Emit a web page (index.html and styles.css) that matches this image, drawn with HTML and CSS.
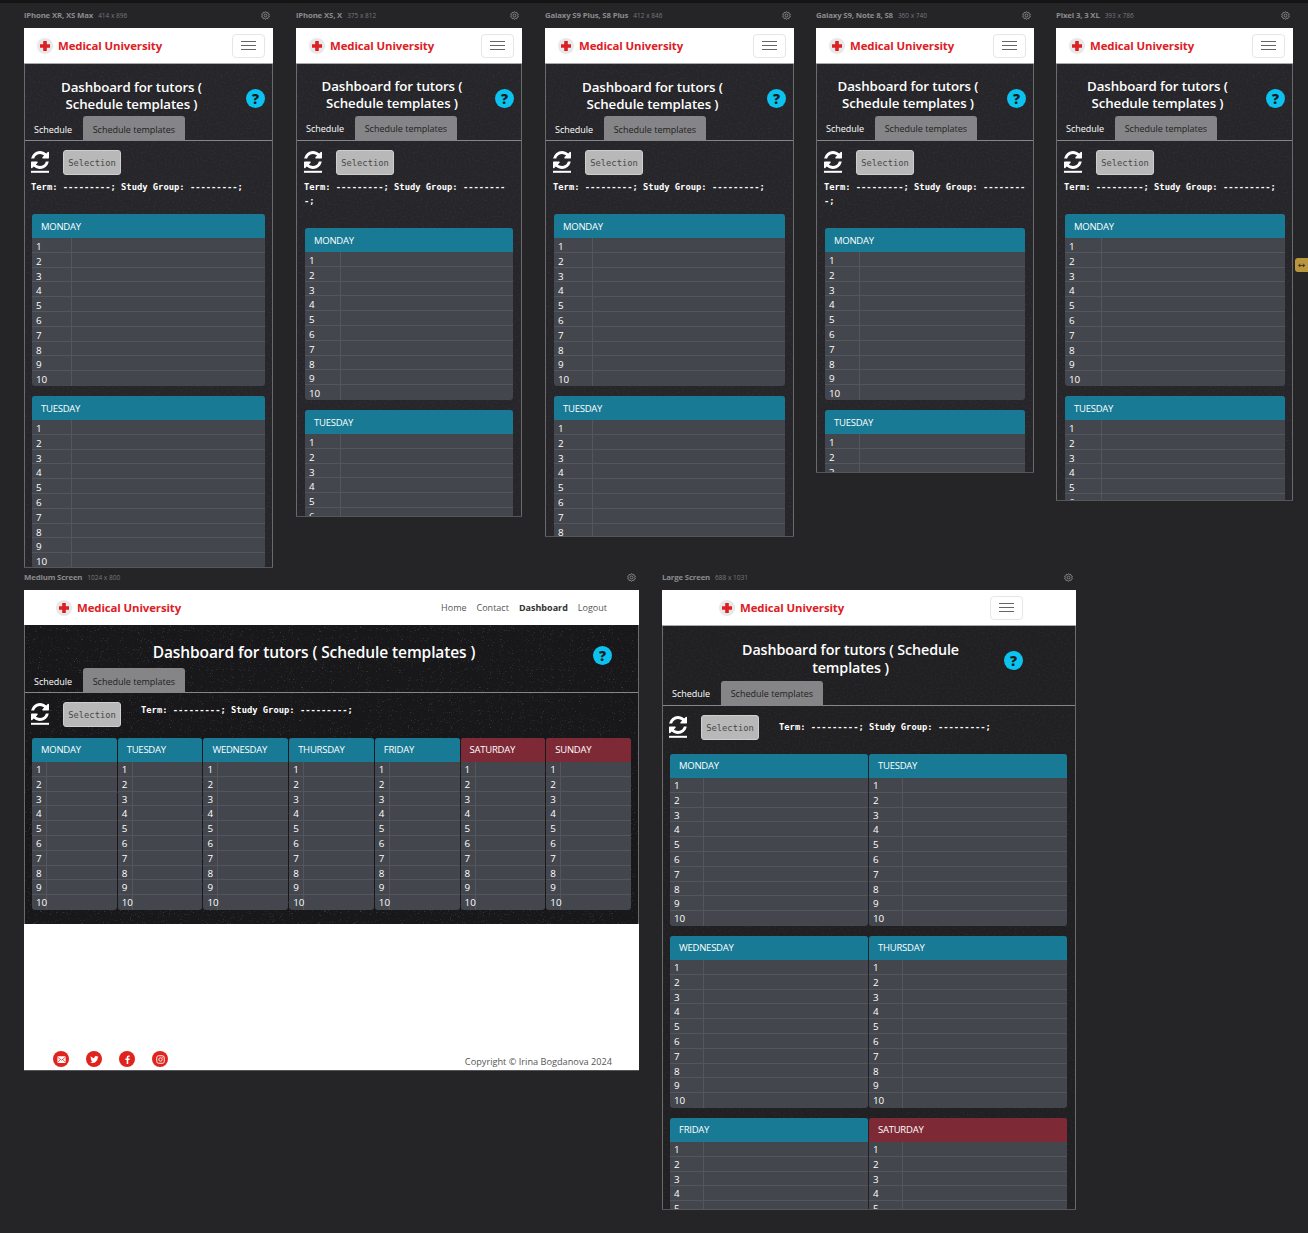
FILE: index.html
```html
<!DOCTYPE html>
<html lang="en">
<head>
<meta charset="UTF-8">
<meta name="viewport" content="width=device-width, initial-scale=1.0">
<title>Responsive preview - Medical University</title>
<link rel="stylesheet" href="styles.css">
</head>
<body>

<div id="board" class="board">
  <!-- Device previews are added here by script.js -->
</div>

<div class="handle">&#8596;</div>

<script src="script.js"></script>
</body>
</html>
```

FILE: styles.css
```css
* {
  box-sizing: border-box;
}
body {
  margin: 0;
  height: 1233px;
  overflow: hidden;
  background-color: #252527;
  border-top: 3px solid #141415;
  font-family: "Open Sans", "Noto Sans", sans-serif;
}
.board {
  position: relative;
  height: 1230px;
}

/* Each preview is a window on the free canvas */
.device {
  position: absolute;
}
.dev-xr { left: 24px; top: 5px; width: 249px; --num: 40px; --screen: 540px; }
.dev-xs { left: 296px; top: 5px; width: 226px; --num: 36px; --screen: 489px; }
.dev-s9p { left: 545px; top: 5px; width: 249px; --num: 39px; --screen: 509px; }
.dev-s9 { left: 816px; top: 5px; width: 218px; --num: 35px; --screen: 445px; }
.dev-pixel { left: 1056px; top: 5px; width: 237px; --num: 37px; --screen: 473px; }
.dev-medium { left: 24px; top: 567px; width: 615px; --num: 15px; --screen: 481px; }
.dev-large { left: 662px; top: 567px; width: 414px; --num: 34px; --screen: 620px; }

.label {
  display: flex;
  align-items: center;
  height: 14px;
  margin-bottom: 6px;
  padding-right: 3px;
  font-size: 7.8px;
  color: #8b8b8d;
}
.label b {
  margin-right: 5px;
  letter-spacing: -.15px;
}
.label span {
  flex: 1;
  font-size: 6.5px;
  color: #77777a;
}
.gear {
  width: 9px;
  height: 9px;
  fill: none;
  stroke: #8b8b8d;
  stroke-width: 1.6;
}

.screen {
  display: flex;
  flex-direction: column;
  height: var(--screen);
  overflow: hidden;
  background-color: #fff;
  border-bottom: 1px solid #55555a;
}

/* Navbar */
.navbar {
  display: flex;
  flex: none;
  align-items: center;
  height: 36px;
  padding: 0 8px 0 13px;
  background-color: #fff;
  border-bottom: 1px solid #aaa;
}
.dev-medium .navbar {
  height: 35px;
  padding: 0 32px 0 32px;
  border-bottom: 0;
}
.dev-large .navbar {
  padding: 0 53px 0 57px;
}
.brand {
  display: flex;
  flex: 1;
  align-items: center;
  font-size: 11.4px;
  font-weight: 700;
  letter-spacing: -.1px;
  color: #dd2024;
}
.logo {
  width: 16px;
  height: 16px;
  margin-right: 5px;
}
.toggler {
  display: flex;
  flex-direction: column;
  justify-content: center;
  gap: 3px;
  width: 33px;
  height: 24px;
  padding: 0 8px;
  border: 1px solid #e6e6e6;
  border-radius: 4px;
}
.toggler i {
  height: 1px;
  background-color: #666;
}
.links {
  display: flex;
  gap: 10px;
  font-size: 9px;
  color: #555;
}
.links b {
  color: #333;
}

/* Chalkboard area */
.hero {
  flex: none;
  min-height: 100%;
  background-color: #26262a;
  background-image: url("data:image/svg+xml,%3Csvg xmlns='http://www.w3.org/2000/svg' width='320' height='320'%3E%3Cfilter id='n'%3E%3CfeTurbulence type='fractalNoise' baseFrequency='.5' numOctaves='4' stitchTiles='stitch'/%3E%3CfeColorMatrix values='0 0 0 0 1 0 0 0 0 1 0 0 0 0 1 1.3 0 0 0 -.62'/%3E%3C/filter%3E%3Crect width='320' height='320' filter='url(%23n)' opacity='.08'/%3E%3C/svg%3E");
  border-left: 1px solid #6a6a6c;
  border-right: 1px solid #6a6a6c;
}
.dev-medium .hero {
  min-height: 0;
  padding-bottom: 14px;
  background-color: #18181b;
  background-image: url("data:image/svg+xml,%3Csvg xmlns='http://www.w3.org/2000/svg' width='320' height='320'%3E%3Cfilter id='s'%3E%3CfeTurbulence type='fractalNoise' baseFrequency='.9' numOctaves='2' stitchTiles='stitch'/%3E%3CfeColorMatrix values='0 0 0 0 1 0 0 0 0 1 0 0 0 0 1 6 0 0 0 -3.9'/%3E%3C/filter%3E%3Crect width='320' height='320' filter='url(%23s)' opacity='.14'/%3E%3C/svg%3E");
}
.dev-large .hero {
  background-color: #202023;
}
.title-row {
  display: flex;
  align-items: center;
  padding: 15px 7px 3px;
}
.title {
  flex: 1;
  margin: 0;
  font-size: 13.3px;
  font-weight: 600;
  line-height: 17px;
  letter-spacing: -.1px;
  text-align: center;
  color: #fff;
}
.dev-xs .title, .dev-s9 .title, .dev-pixel .title {
  margin: -1px 0 1px;
}
.help {
  flex: none;
  width: 19px;
  height: 19px;
  margin: 2px 0 -2px 15px;
  border-radius: 50%;
  background-color: #0cc3ef;
  font-size: 14px;
  font-weight: 800;
  line-height: 19px;
  text-align: center;
  color: #1c1c20;
}
.dev-medium .title-row {
  padding: 16px 7px 5px;
}
.dev-medium .title {
  padding-left: 18px;
  font-size: 15.5px;
  line-height: 22px;
}
.dev-medium .help {
  margin: 3px 19px -3px 15px;
}
.dev-large .title-row {
  padding: 15px 7px 4px;
}
.dev-large .title {
  padding: 0 0 0 42px;
  font-size: 14.3px;
  line-height: 18px;
}
.dev-large .help {
  margin: 1px 45px -1px 15px;
}

.tabs {
  display: flex;
  align-items: stretch;
  height: 25px;
  padding-left: 9px;
  border-bottom: 1px solid #86868a;
  font-size: 9px;
  line-height: 28px;
}
.dev-xs .tabs, .dev-s9 .tabs, .dev-pixel .tabs {
  line-height: 26px;
}
.dev-large .tabs {
  line-height: 25px;
}
.tab {
  padding-right: 11px;
  color: #fff;
}
.tab-active {
  padding: 0 9.5px;
  border-radius: 3px 3px 0 0;
  background-color: #858587;
  color: #222;
}

.content {
  padding: 9px 7px 0;
}
.dev-xs .content, .dev-s9p .content, .dev-s9 .content {
  padding: 9px 8px 0;
}
.dev-pixel .content {
  padding: 9px 7px 0 8px;
}
.dev-large .content {
  padding: 9px 8px 0 7px;
}
.toolbar {
  display: flex;
  align-items: flex-start;
  gap: 14px;
  margin-left: -1px;
}
.refresh {
  flex: none;
  width: 18px;
  height: 22px;
  margin-top: 1px;
}
.selection {
  width: 58px;
  height: 25px;
  padding: 0;
  border: 1px solid #cfcfcf;
  border-radius: 3px;
  background-color: #b8b8b8;
  font-family: "DejaVu Sans Mono", monospace;
  font-size: 8.8px;
  color: #484848;
}
.term {
  margin: 5px -1px 20px -1px;
  font-family: "DejaVu Sans Mono", monospace;
  font-size: 8.8px;
  font-weight: 700;
  line-height: 14px;
  color: #fff;
}
.dev-xs .term {
  margin-right: 3px;
}
.toolbar .term {
  margin: 1px 0 0 6px;
}
.dev-medium .toolbar {
  margin-bottom: 11px;
}
.dev-large .toolbar {
  margin-bottom: 14px;
}
.dev-large .toolbar .term {
  margin-top: 5px;
}

/* Timetable */
.days {
  display: grid;
  grid-template-columns: 1fr;
  gap: 10px 1px;
}
.dev-medium .days {
  grid-template-columns: repeat(7, 1fr);
}
.dev-large .days {
  grid-template-columns: repeat(2, 1fr);
}
.day {
  overflow: hidden;
  border-radius: 3px;
  background-color: #43464c;
}
.day-head {
  height: 24px;
  padding-left: 9px;
  background-color: #187a94;
  font-size: 9.5px;
  line-height: 25px;
  letter-spacing: -.25px;
  color: #fff;
}
.dev-medium .day-head, .dev-large .day-head {
  line-height: 23px;
}
.weekend .day-head {
  background-color: #7e2a36;
}
.row {
  display: flex;
  height: 14.8px;
  border-bottom: 1px solid #53565d;
  font-size: 9.8px;
  line-height: 17px;
  color: #fff;
}
.dev-medium .row, .dev-large .row {
  line-height: 15px;
}
.row:last-child {
  border-bottom: 0;
}
.num {
  flex: none;
  width: var(--num);
  padding-left: 4px;
  border-right: 1px solid #53565d;
}

/* Footer */
.footer {
  display: flex;
  flex: 1;
  align-items: flex-end;
  justify-content: space-between;
  padding: 0 27px 3px 29px;
  font-size: 9.2px;
  color: #555;
}
.copyright {
  margin-bottom: -1px;
}
.socials {
  display: flex;
  gap: 17px;
}
.social {
  width: 16px;
  height: 16px;
  padding: 3.5px;
  border-radius: 50%;
  background-color: #e0231d;
}
.social svg {
  display: block;
  width: 9px;
  height: 9px;
}

.handle {
  position: absolute;
  right: 0;
  top: 258px;
  width: 13px;
  height: 14px;
  border-radius: 3px 0 0 3px;
  background-color: #b9963c;
  font-family: "DejaVu Sans", sans-serif;
  font-size: 9px;
  line-height: 14px;
  text-align: center;
  color: #2a2a2a;
}
```

FILE: script.js
```js
const devices = [
  { id: 'dev-xr', name: 'iPhone XR, XS Max', size: '414 x 896', days: 2 },
  { id: 'dev-xs', name: 'iPhone XS, X', size: '375 x 812', days: 2 },
  { id: 'dev-s9p', name: 'Galaxy S9 Plus, S8 Plus', size: '412 x 846', days: 2 },
  { id: 'dev-s9', name: 'Galaxy S9, Note 8, S8', size: '360 x 740', days: 2 },
  { id: 'dev-pixel', name: 'Pixel 3, 3 XL', size: '393 x 786', days: 2 },
  { id: 'dev-medium', name: 'Medium Screen', size: '1024 x 800', days: 7, wide: true, links: true, footer: true },
  { id: 'dev-large', name: 'Large Screen', size: '688 x 1031', days: 6, wide: true }
];

const dayNames = ['MONDAY', 'TUESDAY', 'WEDNESDAY', 'THURSDAY', 'FRIDAY', 'SATURDAY', 'SUNDAY'];

const logoIcon = `<svg class="logo" viewBox="0 0 16 16">
  <circle cx="8" cy="8" r="8" fill="#e8e8e8"/>
  <path d="M6.2 3h3.6v3.2H13v3.6H9.8V13H6.2V9.8H3V6.2h3.2z" fill="#dc1f24"/>
</svg>`;

const gearIcon = `<svg class="gear" viewBox="0 0 16 16">
  <circle cx="8" cy="8" r="2.5"/>
  <path d="M8 1l1.5 2 2.5-.6.6 2.5 2.4 1L13.8 8l1.2 2.1-2.400 1-.6 2.500-2.500-.6L8 15l-1.500-2-2.500.6-.6-2.500-2.400-1L2.200 8 1 5.900l2.400-1L4 2.400l2.500.6z"/>
</svg>`;

// Two arrows of the refresh icon with the underline below
const refreshIcon = `<svg class="refresh" viewBox="0 0 18 22">
  <svg width="18" height="18" viewBox="128 128 1536 1536">
    <path fill="#fff" d="M1639 1056q0 5-1 7-64 268-268 434.500t-478 166.500q-146 0-282.500-55t-243.500-157l-129 129q-19 19-45 19t-45-19-19-45v-448q0-26 19-45t45-19h448q26 0 45 19t19 45-19 45l-137 137q71 66 161 102t187 36q134 0 250-65t186-179q11-17 53-117 8-23 30-23h192q13 0 22.500 9.500t9.500 22.500zm25-800v448q0 26-19 45t-45 19h-448q-26 0-45-19t-19-45 19-45l138-138q-148-137-349-137-134 0-250 65t-186 179q-11 17-53 117-8 23-30 23h-199q-13 0-22.500-9.500t-9.500-22.500v-7q65-268 270-434.500t480-166.500q146 0 284 55.500t245 156.500l130-129q19-19 45-19t45 19 19 45z"/>
  </svg>
  <rect y="19.8" width="18" height="2" fill="#fff"/>
</svg>`;

const socialIcons = [
  '<rect x="1" y="3" width="22" height="18" rx="2" fill="#fff"/><path d="M2 6l10 8 10-8M2 19l7-7M22 19l-7-7" fill="none" stroke="#e0231d" stroke-width="2"/>',
  '<path d="M23 4.900c-.8.4-1.700.6-2.600.7.900-.6 1.700-1.400 2-2.500-.9.500-1.900.9-2.900 1.100A4.600 4.600 0 0 0 11.600 8.400C7.800 8.200 4.400 6.400 2.200 3.600c-1.200 2.100-.6 4.800 1.400 6.100-.7 0-1.400-.2-2.100-.6 0 2.200 1.600 4.100 3.700 4.500-.7.2-1.400.2-2.100.1.600 1.900 2.300 3.200 4.300 3.200A9.300 9.300 0 0 1 .5 18.800 13 13 0 0 0 20.600 7.300c.9-.6 1.700-1.400 2.400-2.400z" fill="#fff"/>',
  '<path d="M14 24V13.500h3.500l.6-4.100H14V6.800c0-1.200.4-2 2-2h2.200V1.200C17.800 1.100 16.500 1 15.100 1 12 1 9.800 2.900 9.800 6.400v3H6.300v4.100h3.500V24z" fill="#fff"/>',
  '<rect x="2" y="2" width="20" height="20" rx="5" fill="none" stroke="#fff" stroke-width="2.5"/><circle cx="12" cy="12" r="4.5" fill="none" stroke="#fff" stroke-width="2.5"/><circle cx="18" cy="6" r="1.5" fill="#fff"/>'
];

function renderDay(name) {
  let rows = '';
  for (let i = 1; i <= 10; i++) {
    rows += `<div class="row"><div class="num">${i}</div></div>`;
  }
  const weekend = name === 'SATURDAY' || name === 'SUNDAY' ? ' weekend' : '';
  return `<div class="day${weekend}"><div class="day-head">${name}</div>${rows}</div>`;
}

function renderDevice(device) {
  const term = '<div class="term">Term: ---------; Study Group: ---------;</div>';
  const right = device.links
    ? '<div class="links"><span>Home</span><span>Contact</span><b>Dashboard</b><span>Logout</span></div>'
    : '<div class="toggler"><i></i><i></i><i></i></div>';
  const footer = device.footer
    ? `<div class="footer">
        <div class="socials">${socialIcons.map(icon => `<div class="social"><svg viewBox="0 0 24 24">${icon}</svg></div>`).join('')}</div>
        <div class="copyright">Copyright &copy; Irina Bogdanova 2024</div>
      </div>`
    : '';

  return `<div class="device ${device.id}">
    <div class="label"><b>${device.name}</b><span>${device.size}</span>${gearIcon}</div>
    <div class="screen">
      <div class="navbar">
        <div class="brand">${logoIcon}Medical University</div>
        ${right}
      </div>
      <div class="hero">
        <div class="title-row">
          <h1 class="title">Dashboard for tutors ( Schedule templates )</h1>
          <div class="help">?</div>
        </div>
        <div class="tabs">
          <div class="tab">Schedule</div>
          <div class="tab-active">Schedule templates</div>
        </div>
        <div class="content">
          <div class="toolbar">
            ${refreshIcon}
            <button class="selection">Selection</button>
            ${device.wide ? term : ''}
          </div>
          ${device.wide ? '' : term}
          <div class="days">${dayNames.slice(0, device.days).map(renderDay).join('')}</div>
        </div>
      </div>
      ${footer}
    </div>
  </div>`;
}

document.getElementById('board').innerHTML = devices.map(renderDevice).join('');
```
